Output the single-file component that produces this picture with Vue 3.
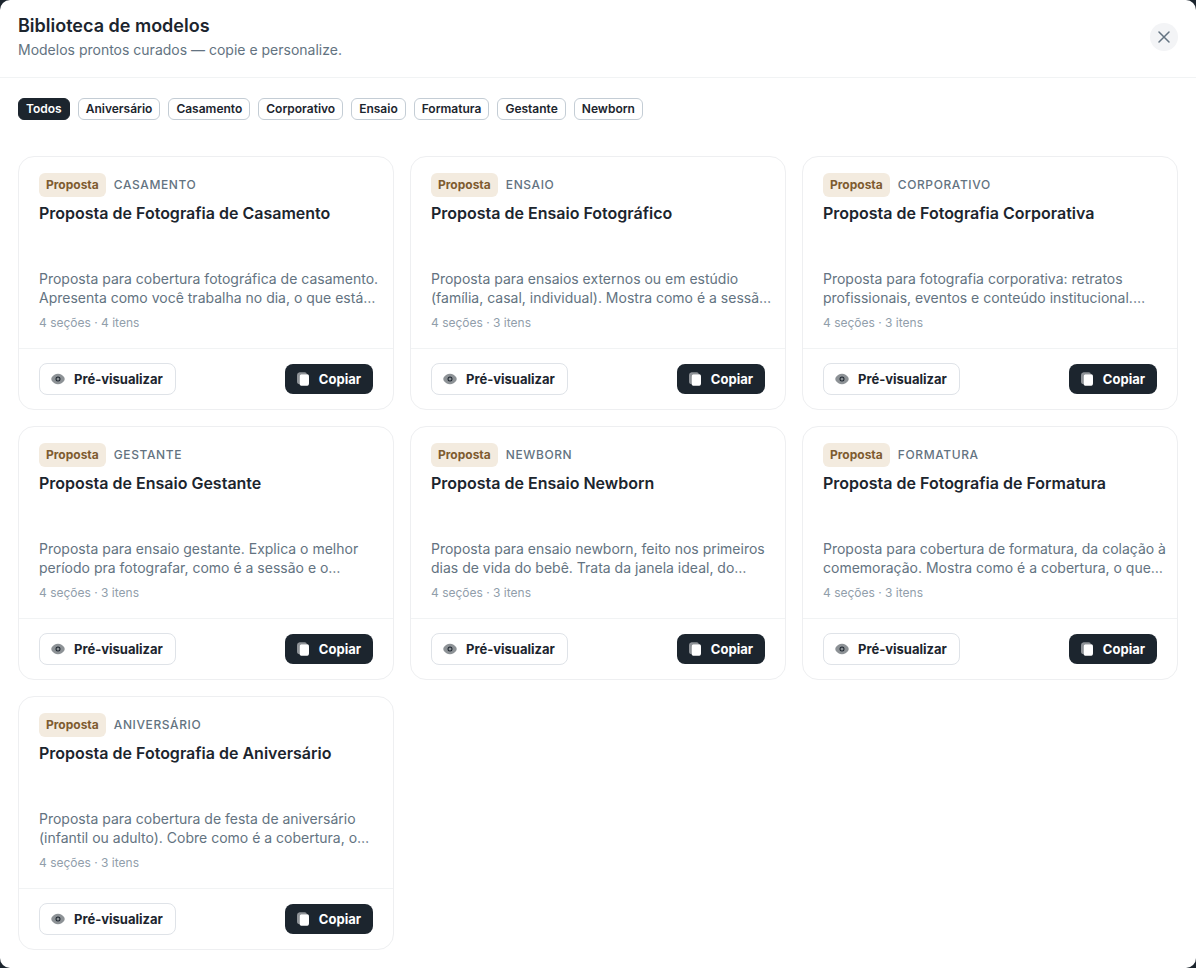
<script setup>
import { ref, computed } from 'vue'

const categories = ['Todos', 'Aniversário', 'Casamento', 'Corporativo', 'Ensaio', 'Formatura', 'Gestante', 'Newborn']
const active = ref('Todos')

const templates = [
  {
    category: 'Casamento',
    title: 'Proposta de Fotografia de Casamento',
    description: 'Proposta para cobertura fotográfica de casamento.\nApresenta como você trabalha no dia, o que está…',
    meta: '4 seções · 4 itens',
  },
  {
    category: 'Ensaio',
    title: 'Proposta de Ensaio Fotográfico',
    description: 'Proposta para ensaios externos ou em estúdio\n(família, casal, individual). Mostra como é a sessã…',
    meta: '4 seções · 3 itens',
  },
  {
    category: 'Corporativo',
    title: 'Proposta de Fotografia Corporativa',
    description: 'Proposta para fotografia corporativa: retratos\nprofissionais, eventos e conteúdo institucional.…',
    meta: '4 seções · 3 itens',
  },
  {
    category: 'Gestante',
    title: 'Proposta de Ensaio Gestante',
    description: 'Proposta para ensaio gestante. Explica o melhor\nperíodo pra fotografar, como é a sessão e o…',
    meta: '4 seções · 3 itens',
  },
  {
    category: 'Newborn',
    title: 'Proposta de Ensaio Newborn',
    description: 'Proposta para ensaio newborn, feito nos primeiros\ndias de vida do bebê. Trata da janela ideal, do…',
    meta: '4 seções · 3 itens',
  },
  {
    category: 'Formatura',
    title: 'Proposta de Fotografia de Formatura',
    description: 'Proposta para cobertura de formatura, da colação à\ncomemoração. Mostra como é a cobertura, o que…',
    meta: '4 seções · 3 itens',
  },
  {
    category: 'Aniversário',
    title: 'Proposta de Fotografia de Aniversário',
    description: 'Proposta para cobertura de festa de aniversário\n(infantil ou adulto). Cobre como é a cobertura, o…',
    meta: '4 seções · 3 itens',
  },
]

const visible = computed(() =>
  active.value === 'Todos' ? templates : templates.filter(t => t.category === active.value)
)
</script>

<template>
  <div class="dialog">
    <header class="header">
      <div>
        <h1>Biblioteca de modelos</h1>
        <p>Modelos prontos curados — copie e personalize.</p>
      </div>
      <button type="button" class="close" aria-label="Fechar">
        <svg width="12" height="12" viewBox="0 0 12 12" fill="none" stroke="currentColor" stroke-width="1.5" stroke-linecap="round">
          <path d="M1 1l10 10M11 1L1 11" />
        </svg>
      </button>
    </header>

    <main class="content">
      <div class="filters">
        <button
          v-for="c in categories"
          :key="c"
          type="button"
          class="chip"
          :class="{ active: c === active }"
          @click="active = c"
        >{{ c }}</button>
      </div>

      <div class="grid">
        <article v-for="t in visible" :key="t.category" class="card">
          <div class="card-body">
            <div class="tags">
              <span class="badge">Proposta</span>
              <span class="category">{{ t.category }}</span>
            </div>
            <h2>{{ t.title }}</h2>
            <p class="description">{{ t.description }}</p>
            <p class="meta">{{ t.meta }}</p>
          </div>
          <div class="card-footer">
            <button type="button" class="btn outline">
              <svg width="16" height="16" viewBox="0 0 24 24" fill="currentColor">
                <path opacity="0.5" d="M2 12c0 1.64.425 2.191 1.275 3.296C4.972 17.5 7.818 20 12 20s7.028-2.5 8.725-4.704C21.575 14.192 22 13.639 22 12c0-1.64-.425-2.191-1.275-3.296C19.028 6.5 16.182 4 12 4S4.972 6.5 3.275 8.704C2.425 9.81 2 10.361 2 12" />
                <path fill-rule="evenodd" d="M8.25 12a3.75 3.75 0 1 1 7.5 0a3.75 3.75 0 0 1-7.5 0m1.5 0a2.25 2.25 0 1 1 4.5 0a2.25 2.25 0 0 1-4.5 0" />
              </svg>
              Pré-visualizar
            </button>
            <button type="button" class="btn solid">
              <svg width="16" height="16" viewBox="0 0 24 24" fill="currentColor">
                <path d="M16.2 5H11.5C9.8 5 8.5 5 7.7 5.8C6.8 6.7 6.8 8 6.8 10v7c0 2 0 3.3.9 4.2C8.5 22 9.8 22 11.5 22h4.7c1.8 0 3.1 0 4-.8c.8-.9.8-2.2.8-4.2v-7c0-2 0-3.3-.8-4.2c-.9-.8-2.2-.8-4-.8" />
                <path opacity="0.5" d="M3.2 5.2C3 6 3 7 3 9v5c0 2 0 3.2.5 4c.5.9 1.3 1.5 3.3 1.7V10c0-2 0-3.3.9-4.2C8.5 5 9.8 5 11.500 5h6.300c-.3-2-1.200-3-3.200-3H9C6 2 3.800 2.500 3.200 5.200" />
              </svg>
              Copiar
            </button>
          </div>
        </article>
      </div>
    </main>
  </div>
</template>

<style>
body {
  margin: 0;
  background: #1c252e;
}
</style>

<style scoped>
.dialog {
  box-sizing: border-box;
  min-height: 100vh;
  background: #fff;
  border-radius: 10px;
  font-family: Inter, "Liberation Sans", sans-serif;
  color: #1c252e;
}

h1, h2, p {
  margin: 0;
}

button {
  font-family: inherit;
  cursor: pointer;
}

.header {
  display: flex;
  justify-content: space-between;
  align-items: flex-start;
  padding: 12px 18px 17px;
  border-bottom: 1px solid #f1f3f4;
}

.header h1 {
  font-size: 18px;
  line-height: 28px;
  font-weight: 600;
}

.header p {
  font-size: 14px;
  line-height: 20px;
  color: #637381;
}

.close {
  display: flex;
  align-items: center;
  justify-content: center;
  width: 28px;
  height: 28px;
  margin-top: 11px;
  padding: 0;
  border: 0;
  border-radius: 50%;
  background: #f3f4f6;
  color: #637381;
}

.content {
  padding: 20px 18px 18px;
}

.filters {
  display: flex;
  flex-wrap: wrap;
  gap: 8px;
  margin-bottom: 36px;
}

.chip {
  height: 22px;
  padding: 0 7px;
  border: 1px solid #c4cdd5;
  border-radius: 6px;
  background: #fff;
  color: #1c252e;
  font-size: 12px;
  line-height: 20px;
  font-weight: 600;
}

.chip.active {
  background: #1c252e;
  border-color: #1c252e;
  color: #fff;
}

.grid {
  display: grid;
  grid-template-columns: repeat(3, minmax(0, 1fr));
  gap: 16px;
}

.card {
  border: 1px solid #eeeff1;
  border-radius: 16px;
}

.card-body {
  padding: 16px 20px;
}

.tags {
  display: flex;
  align-items: center;
  gap: 8px;
}

.badge {
  padding: 0 7px;
  border-radius: 6px;
  background: #f3ebdf;
  color: #7e5b30;
  font-size: 12px;
  line-height: 24px;
  font-weight: 700;
}

.category {
  color: #637381;
  font-size: 12px;
  line-height: 18px;
  font-weight: 500;
  letter-spacing: 0.05em;
  text-transform: uppercase;
}

.card h2 {
  min-height: 48px;
  margin: 4px 0 20px;
  font-size: 16px;
  line-height: 24px;
  font-weight: 600;
}

.description {
  color: #637381;
  font-size: 14px;
  line-height: 19px;
  white-space: pre;
}

.meta {
  margin-top: 7px;
  color: #919eab;
  font-size: 12px;
  line-height: 18px;
}

.card-footer {
  display: flex;
  justify-content: space-between;
  align-items: center;
  padding: 14px 20px;
  border-top: 1px solid #f1f3f4;
}

.btn {
  display: flex;
  align-items: center;
  gap: 8px;
  border: 0;
  border-radius: 8px;
  font-size: 13px;
  font-weight: 700;
}

.outline {
  height: 32px;
  padding: 0 12px 0 10px;
  border: 1px solid #dfe3e8;
  background: #fff;
  color: #1c252e;
}

.solid {
  height: 30px;
  padding: 0 12px 0 10px;
  background: #1c252e;
  color: #fff;
}
</style>
